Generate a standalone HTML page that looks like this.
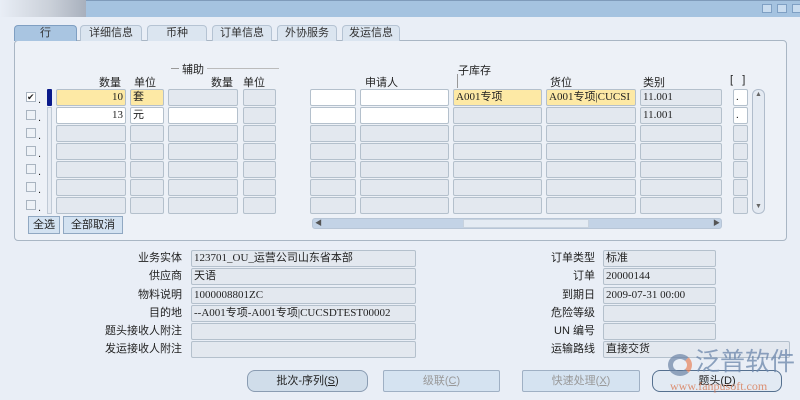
<!DOCTYPE html><html><head><meta charset="utf-8"><style>
body{margin:0;width:800px;height:400px;background:#e9eef6;position:relative;overflow:hidden;font-family:"Liberation Sans","Noto Sans CJK SC",sans-serif;font-size:11px;color:#222}
div{position:absolute;box-sizing:border-box;white-space:nowrap}
.c{height:17px;border:1px solid #b4c0cc;border-radius:2px;background:#e3e8ef;line-height:15px;padding:0 2px;font-family:"Liberation Serif","Noto Sans CJK SC",serif;overflow:hidden}
.w{background:#fff}.y{background:#fde9a5}
.cb{width:10px;height:10px;border:1px solid #a9b4c0;background:#eef2f7}
.l{font-size:11px}
.tab{top:25px;height:16px;background:#dbe5f0;border:1px solid #b5c3d3;border-bottom:none;border-radius:4px 4px 0 0;text-align:center;line-height:15px;color:#333}
.btn{height:22px;top:370px;border:1px solid #9fb0c4;border-radius:8px;background:#d5e3f1;text-align:center;line-height:20px;color:#999}
.lab{width:120px;text-align:right;line-height:15px}
</style></head><body>
<div style="left:0;top:0;width:800px;height:17px;background:#a5c3e0;border-top:1px solid #7f9bba"></div>
<div style="left:0;top:0;width:86px;height:17px;background:linear-gradient(90deg,#e9eef6,#c9cfd8 60%,#a8b0bd)"></div>
<div style="left:762px;top:4px;width:10px;height:9px;background:#c9dcef;border:1px solid #7fa0c4"></div>
<div style="left:777px;top:4px;width:10px;height:9px;background:#c9dcef;border:1px solid #7fa0c4"></div>
<div style="left:792px;top:4px;width:10px;height:9px;background:#c9dcef;border:1px solid #7fa0c4"></div>
<div style="left:14px;top:40px;width:773px;height:201px;border:1px solid #a9b6c4;border-radius:4px;background:#edf1f7"></div>
<div class="tab" style="left:14px;width:63px;background:#a9c5e1;border-color:#7f9fc2">行</div>
<div class="tab" style="left:80px;width:62px">详细信息</div>
<div class="tab" style="left:147px;width:60px">币种</div>
<div class="tab" style="left:212px;width:60px">订单信息</div>
<div class="tab" style="left:277px;width:60px">外协服务</div>
<div class="tab" style="left:342px;width:58px">发运信息</div>
<div style="left:171px;top:68px;width:8px;border-top:1px solid #999"></div>
<div class="l" style="left:182px;top:61px">辅助</div>
<div style="left:207px;top:68px;width:72px;border-top:1px solid #bbb"></div>
<div class="l" style="left:99px;top:74px">数量</div><div class="l" style="left:134px;top:74px">单位</div>
<div class="l" style="left:211px;top:74px">数量</div><div class="l" style="left:243px;top:74px">单位</div>
<div class="l" style="left:365px;top:74px">申请人</div>
<div class="l" style="left:458px;top:62px">子库存</div>
<div style="left:457px;top:74px;height:14px;border-left:1px solid #999"></div>
<div class="l" style="left:550px;top:74px">货位</div>
<div class="l" style="left:643px;top:74px">类别</div>
<div class="l" style="left:730px;top:74px">[&nbsp;&nbsp;&nbsp;]</div>
<div class="cb" style="left:26px;top:92px;background:#fff;font-size:9px;line-height:8px">✔</div><div style="left:38px;top:94px">.</div>
<div class="cb" style="left:26px;top:110px"></div><div style="left:38px;top:112px">.</div>
<div class="cb" style="left:26px;top:128px"></div><div style="left:38px;top:130px">.</div>
<div class="cb" style="left:26px;top:146px"></div><div style="left:38px;top:148px">.</div>
<div class="cb" style="left:26px;top:164px"></div><div style="left:38px;top:166px">.</div>
<div class="cb" style="left:26px;top:182px"></div><div style="left:38px;top:184px">.</div>
<div class="cb" style="left:26px;top:200px"></div><div style="left:38px;top:202px">.</div>
<div style="left:47px;top:89px;width:5px;height:17px;background:#0a1a8a;border-radius:1px"></div>
<div style="left:47px;top:107px;width:5px;height:107px;border:1px solid #c0cad6;background:#e6ebf2"></div>
<div class="c y" style="left:56px;top:89px;width:70px;text-align:right">10</div>
<div class="c y" style="left:130px;top:89px;width:34px">套</div>
<div class="c" style="left:168px;top:89px;width:70px"></div>
<div class="c" style="left:243px;top:89px;width:33px"></div>
<div class="c w" style="left:310px;top:89px;width:46px"></div>
<div class="c w" style="left:360px;top:89px;width:89px"></div>
<div class="c y" style="left:453px;top:89px;width:89px">A001专项</div>
<div class="c y" style="left:546px;top:89px;width:90px">A001专项|CUCSI</div>
<div class="c" style="left:640px;top:89px;width:82px">11.001</div>
<div class="c w" style="left:733px;top:89px;width:15px">.</div>
<div class="c w" style="left:56px;top:107px;width:70px;text-align:right">13</div>
<div class="c w" style="left:130px;top:107px;width:34px">元</div>
<div class="c w" style="left:168px;top:107px;width:70px"></div>
<div class="c" style="left:243px;top:107px;width:33px"></div>
<div class="c w" style="left:310px;top:107px;width:46px"></div>
<div class="c w" style="left:360px;top:107px;width:89px"></div>
<div class="c" style="left:453px;top:107px;width:89px"></div>
<div class="c" style="left:546px;top:107px;width:90px"></div>
<div class="c" style="left:640px;top:107px;width:82px">11.001</div>
<div class="c w" style="left:733px;top:107px;width:15px">.</div>
<div style="left:0;top:125px;width:800px;height:90px">
<div class="c" style="left:56px;top:0;width:70px"></div><div class="c" style="left:130px;top:0;width:34px"></div><div class="c" style="left:168px;top:0;width:70px"></div><div class="c" style="left:243px;top:0;width:33px"></div><div class="c" style="left:310px;top:0;width:46px"></div><div class="c" style="left:360px;top:0;width:89px"></div><div class="c" style="left:453px;top:0;width:89px"></div><div class="c" style="left:546px;top:0;width:90px"></div><div class="c" style="left:640px;top:0;width:82px"></div><div class="c" style="left:733px;top:0;width:15px"></div>
<div class="c" style="left:56px;top:18px;width:70px"></div><div class="c" style="left:130px;top:18px;width:34px"></div><div class="c" style="left:168px;top:18px;width:70px"></div><div class="c" style="left:243px;top:18px;width:33px"></div><div class="c" style="left:310px;top:18px;width:46px"></div><div class="c" style="left:360px;top:18px;width:89px"></div><div class="c" style="left:453px;top:18px;width:89px"></div><div class="c" style="left:546px;top:18px;width:90px"></div><div class="c" style="left:640px;top:18px;width:82px"></div><div class="c" style="left:733px;top:18px;width:15px"></div>
<div class="c" style="left:56px;top:36px;width:70px"></div><div class="c" style="left:130px;top:36px;width:34px"></div><div class="c" style="left:168px;top:36px;width:70px"></div><div class="c" style="left:243px;top:36px;width:33px"></div><div class="c" style="left:310px;top:36px;width:46px"></div><div class="c" style="left:360px;top:36px;width:89px"></div><div class="c" style="left:453px;top:36px;width:89px"></div><div class="c" style="left:546px;top:36px;width:90px"></div><div class="c" style="left:640px;top:36px;width:82px"></div><div class="c" style="left:733px;top:36px;width:15px"></div>
<div class="c" style="left:56px;top:54px;width:70px"></div><div class="c" style="left:130px;top:54px;width:34px"></div><div class="c" style="left:168px;top:54px;width:70px"></div><div class="c" style="left:243px;top:54px;width:33px"></div><div class="c" style="left:310px;top:54px;width:46px"></div><div class="c" style="left:360px;top:54px;width:89px"></div><div class="c" style="left:453px;top:54px;width:89px"></div><div class="c" style="left:546px;top:54px;width:90px"></div><div class="c" style="left:640px;top:54px;width:82px"></div><div class="c" style="left:733px;top:54px;width:15px"></div>
<div class="c" style="left:56px;top:72px;width:70px"></div><div class="c" style="left:130px;top:72px;width:34px"></div><div class="c" style="left:168px;top:72px;width:70px"></div><div class="c" style="left:243px;top:72px;width:33px"></div><div class="c" style="left:310px;top:72px;width:46px"></div><div class="c" style="left:360px;top:72px;width:89px"></div><div class="c" style="left:453px;top:72px;width:89px"></div><div class="c" style="left:546px;top:72px;width:90px"></div><div class="c" style="left:640px;top:72px;width:82px"></div><div class="c" style="left:733px;top:72px;width:15px"></div>
</div>
<div style="left:752px;top:89px;width:13px;height:125px;border:1px solid #b0bccb;border-radius:6px;background:#e4eaf2"></div>
<div style="left:755px;top:91px;font-size:7px;color:#666">▲</div>
<div style="left:755px;top:203px;font-size:7px;color:#666">▼</div>
<div style="left:312px;top:218px;width:410px;height:11px;border:1px solid #b7c5d6;border-radius:3px;background:#c3d3e6"></div>
<div style="left:463px;top:219px;width:126px;height:9px;background:#e4ebf3;border:1px solid #c7d2de"></div>
<div style="left:315px;top:218px;font-size:7px;color:#555">◀</div>
<div style="left:713px;top:218px;font-size:7px;color:#555">▶</div>
<div style="left:28px;top:216px;width:32px;height:18px;border:1px solid #90a8c2;background:#d3e2f1;text-align:center;line-height:16px">全选</div>
<div style="left:63px;top:216px;width:60px;height:18px;border:1px solid #90a8c2;background:#d3e2f1;text-align:center;line-height:16px">全部取消</div>
<div class="lab" style="left:62px;top:251px">业务实体</div>
<div class="lab" style="left:62px;top:269px">供应商</div>
<div class="lab" style="left:62px;top:288px">物料说明</div>
<div class="lab" style="left:62px;top:306px">目的地</div>
<div class="lab" style="left:62px;top:324px">题头接收人附注</div>
<div class="lab" style="left:62px;top:342px">发运接收人附注</div>
<div class="c" style="left:191px;top:250px;width:225px">123701_OU_运营公司山东省本部</div>
<div class="c" style="left:191px;top:268px;width:225px">天语</div>
<div class="c" style="left:191px;top:287px;width:225px">1000008801ZC</div>
<div class="c" style="left:191px;top:305px;width:225px">--A001专项-A001专项|CUCSDTEST00002</div>
<div class="c" style="left:191px;top:323px;width:225px"></div>
<div class="c" style="left:191px;top:341px;width:225px"></div>
<div class="lab" style="left:475px;top:251px">订单类型</div>
<div class="lab" style="left:475px;top:269px">订单</div>
<div class="lab" style="left:475px;top:288px">到期日</div>
<div class="lab" style="left:475px;top:306px">危险等级</div>
<div class="lab" style="left:475px;top:324px">UN 编号</div>
<div class="lab" style="left:475px;top:342px">运输路线</div>
<div class="c" style="left:603px;top:250px;width:113px">标准</div>
<div class="c" style="left:603px;top:268px;width:113px">20000144</div>
<div class="c" style="left:603px;top:287px;width:113px">2009-07-31 00:00</div>
<div class="c" style="left:603px;top:305px;width:113px"></div>
<div class="c" style="left:603px;top:323px;width:113px"></div>
<div class="c" style="left:603px;top:341px;width:187px">直接交货</div>
<div class="btn" style="left:247px;width:121px;color:#222;background:#d0ddea;border-color:#8a9cb2">批次-序列(<u>S</u>)</div>
<div class="btn" style="left:383px;width:117px;border-radius:2px">级联(<u>C</u>)</div>
<div class="btn" style="left:522px;width:118px;border-radius:2px">快速处理(<u>X</u>)</div>
<div class="btn" style="left:652px;width:130px;color:#222;background:#e2eaf3;border-color:#55708f">题头(<u>D</u>)</div>
<div style="left:668px;top:354px;width:24px;height:22px;border-radius:50%;border:5px solid #6c84a6;border-right-color:#e8835a;opacity:.7"></div>
<div style="left:695px;top:348px;font-size:25px;line-height:28px;color:#6b86ab;opacity:.75">泛普软件</div>
<div style="left:670px;top:379px;font-size:12px;color:#d9734a;opacity:.75;font-family:'Liberation Serif',serif">www.fanpusoft.com</div>
</body></html>
